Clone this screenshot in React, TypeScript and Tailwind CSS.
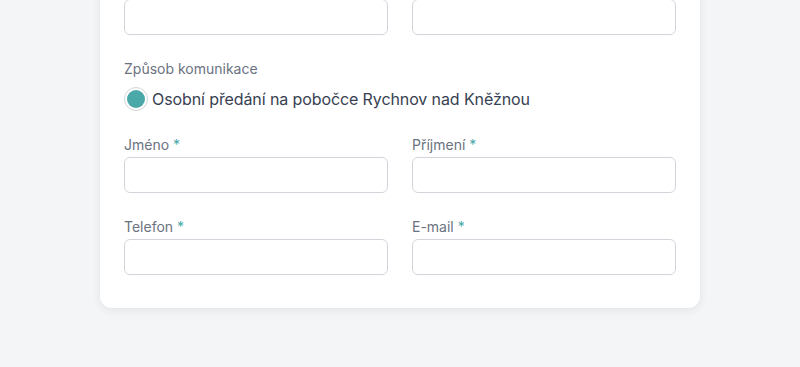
import React from "react";

const Field = ({ label }: { label: string }) => (
  <div className="flex flex-col">
    <label className="text-sm leading-5 text-[#6b7280] mb-0.5">
      {label} <span className="text-[#4aa8a8]">*</span>
    </label>
    <input
      type="text"
      className="h-9 w-full rounded-md border border-[#d1d5db] bg-white px-3 text-sm outline-none"
    />
  </div>
);

export default function App() {
  return (
    <div
      className="w-full h-[367px] overflow-hidden bg-[#f4f5f7]"
      style={{ fontFamily: "Inter, 'Noto Sans', sans-serif" }}
    >
      <div className="mx-auto w-[600px] -mt-[25px] bg-white rounded-xl shadow-[0_2px_10px_rgba(0,0,0,0.08)] px-6 pt-6 pb-[33px]">
        <div className="grid grid-cols-2 gap-x-6">
          <input type="text" className="h-9 w-full rounded-md border border-[#d1d5db] bg-white" />
          <input type="text" className="h-9 w-full rounded-md border border-[#d1d5db] bg-white" />
        </div>

        <div className="mt-6">
          <p className="text-sm leading-5 text-[#6b7280] mb-2">Způsob komunikace</p>
          <label className="flex items-center gap-1 h-6">
            <span className="w-6 h-6 rounded-full border border-[#d1d5db] bg-white flex items-center justify-center">
              <span className="w-[18px] h-[18px] rounded-full bg-[#4aa8a8]" />
            </span>
            <span className="text-base text-[#374151] tracking-[-0.1px]">
              Osobní předání na pobočce Rychnov nad Kněžnou
            </span>
          </label>
        </div>

        <div className="mt-6 grid grid-cols-2 gap-x-6 gap-y-6">
          <Field label="Jméno" />
          <Field label="Příjmení" />
          <Field label="Telefon" />
          <Field label="E-mail" />
        </div>
      </div>
    </div>
  );
}
